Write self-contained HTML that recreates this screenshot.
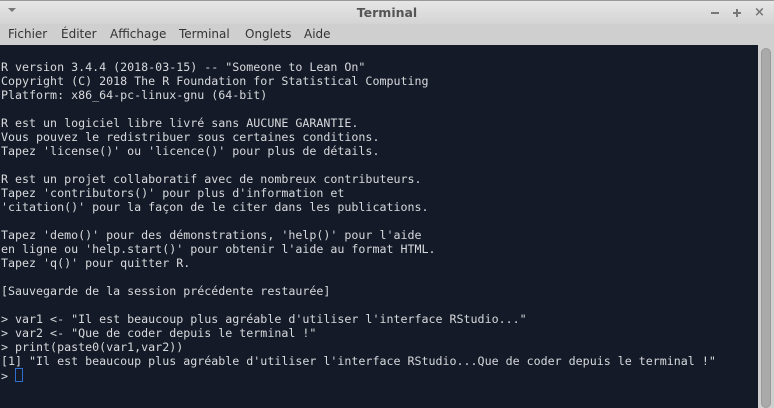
<!DOCTYPE html>
<html><head><meta charset="utf-8"><style>
body{margin:0;width:774px;height:408px;overflow:hidden;background:#cfcfcf;font-family:"DejaVu Sans","Liberation Sans",sans-serif;position:relative}
.tb{position:absolute;left:0;top:0;width:774px;height:24px;background:linear-gradient(#e6e6e6,#d4d4d4);border-top:1px solid #999;box-sizing:border-box}
.title{position:absolute;left:0;width:774px;top:5px;text-align:center;font-size:12.5px;font-weight:bold;color:#555}
.menu{position:absolute;top:27px;font-size:12px;color:#333}
.term{position:absolute;left:0;top:45px;width:758px;height:363px;background:#141a27}
pre{margin:0;position:absolute;left:1px;top:15px;font-family:"DejaVu Sans Mono","Liberation Mono",monospace;font-size:11.65px;line-height:14px;color:#d7d9dc}
.sb{position:absolute;left:761px;top:48px;width:10px;height:360px;background:#aaa;border-radius:5px;border:1px solid #999;box-sizing:border-box}
.cur{display:inline-block;width:6px;height:12px;border:1px solid #2e6fd0;vertical-align:-2px}
</style></head><body>
<div class="tb"></div>
<div style="position:absolute;left:8px;top:8px;width:0;height:0;border-left:4px solid transparent;border-right:4px solid transparent;border-top:4px solid #777"></div>
<div class="title">Terminal</div>
<div style="position:absolute;left:711px;top:12px;width:8px;height:2px;background:#777"></div>
<div style="position:absolute;left:733px;top:12px;width:8px;height:2px;background:#777"></div>
<div style="position:absolute;left:736px;top:9px;width:2px;height:8px;background:#777"></div>
<div style="position:absolute;left:754px;top:5px;font-size:13px;color:#777;font-weight:bold">×</div>
<div class="menu" style="left:8px">Fichier</div>
<div class="menu" style="left:61px">Éditer</div>
<div class="menu" style="left:110px">Affichage</div>
<div class="menu" style="left:179px">Terminal</div>
<div class="menu" style="left:245px">Onglets</div>
<div class="menu" style="left:304px">Aide</div>
<div class="term"><pre>R version 3.4.4 (2018-03-15) -- "Someone to Lean On"
Copyright (C) 2018 The R Foundation for Statistical Computing
Platform: x86_64-pc-linux-gnu (64-bit)

R est un logiciel libre livré sans AUCUNE GARANTIE.
Vous pouvez le redistribuer sous certaines conditions.
Tapez 'license()' ou 'licence()' pour plus de détails.

R est un projet collaboratif avec de nombreux contributeurs.
Tapez 'contributors()' pour plus d'information et
'citation()' pour la façon de le citer dans les publications.

Tapez 'demo()' pour des démonstrations, 'help()' pour l'aide
en ligne ou 'help.start()' pour obtenir l'aide au format HTML.
Tapez 'q()' pour quitter R.

[Sauvegarde de la session précédente restaurée]

&gt; var1 &lt;- "Il est beaucoup plus agréable d'utiliser l'interface RStudio..."
&gt; var2 &lt;- "Que de coder depuis le terminal !"
&gt; print(paste0(var1,var2))
[1] "Il est beaucoup plus agréable d'utiliser l'interface RStudio...Que de coder depuis le terminal !"
&gt; <span class="cur"></span></pre></div>
<div class="sb"></div>
</body></html>
